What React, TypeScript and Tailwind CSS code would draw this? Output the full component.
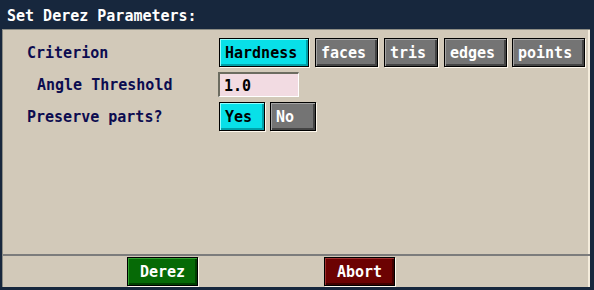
import { ReactNode } from 'react'

const mono = "block pt-[2px] font-['DejaVu_Sans_Mono','Liberation_Mono',monospace] font-bold text-[15px] leading-none"

type Tone = 'cyan' | 'grey'

function ToggleButton({ label, tone, width }: { label: string; tone: Tone; width: string }) {
  const toneCls =
    tone === 'cyan'
      ? 'bg-[#08e0e8] text-black shadow-[1px_1px_0_#fff8ec,inset_1px_1px_0_#90ffff,inset_-2px_-2px_0_#00a0a8]'
      : 'bg-[#747474] text-white shadow-[1px_1px_0_#fff8ec,inset_1px_1px_0_#a4a4a4,inset_-2px_-2px_0_#444444]'
  return (
    <div className={`${width} h-[29px] flex items-center pl-[5px] border border-black ${toneCls}`}>
      <span className={mono}>{label}</span>
    </div>
  )
}

function ActionButton({ label, color }: { label: string; color: 'green' | 'red' }) {
  const colorCls =
    color === 'green'
      ? 'bg-[#066a06] shadow-[1px_1px_0_#fff8ec,inset_1px_1px_0_#30a030,inset_-2px_-2px_0_#004000]'
      : 'bg-[#6c0202] shadow-[1px_1px_0_#fff8ec,inset_1px_1px_0_#a03030,inset_-2px_-2px_0_#400000]'
  return (
    <div className={`w-[71px] h-[29px] flex items-center justify-center border border-black text-white ${colorCls}`}>
      <span className={mono}>{label}</span>
    </div>
  )
}

function Row({ label, indent, children }: { label: string; indent?: boolean; children: ReactNode }) {
  return (
    <div className="flex items-center">
      <div className={`w-[192px] text-[#0c0c50] ${mono} ${indent ? 'pl-[10px]' : ''}`}>{label}</div>
      <div className="flex items-center gap-[6px]">{children}</div>
    </div>
  )
}

export default function App() {
  return (
    <div className="w-[594px] h-[290px] flex flex-col bg-[#17273d]">
      <div className="h-[29px] flex items-center pl-[7px] pt-[2px] text-white">
        <span className={mono}>Set Derez Parameters:</span>
      </div>

      <div className="ml-[2px] w-[588px] h-[258px] flex flex-col border-t border-l border-[#8c8c84] shadow-[inset_-2px_0_0_#f4ecdc] bg-[#d2c9b9]">
        <div className="flex-1 flex flex-col gap-[5px] pt-[8px] pl-[24px]">
          <Row label="Criterion">
            <ToggleButton label="Hardness" tone="cyan" width="w-[90px]" />
            <ToggleButton label="faces" tone="grey" width="w-[63px]" />
            <ToggleButton label="tris" tone="grey" width="w-[54px]" />
            <ToggleButton label="edges" tone="grey" width="w-[63px]" />
            <div className="-ml-px">
              <ToggleButton label="points" tone="grey" width="w-[73px]" />
            </div>
          </Row>
          <Row label="Angle Threshold" indent>
            <div className="-ml-px w-[81px] h-[25px] flex items-center pl-[4px] border-t-2 border-l-2 border-r border-b border-t-[#6c6c60] border-l-[#6c6c60] border-r-white border-b-white bg-[#f2dbe2] text-black">
              <span className={mono}>1.0</span>
            </div>
          </Row>
          <Row label="Preserve parts?">
            <ToggleButton label="Yes" tone="cyan" width="w-[46px]" />
            <div className="-ml-px">
              <ToggleButton label="No" tone="grey" width="w-[46px]" />
            </div>
          </Row>
        </div>

        <div className="h-[2px] bg-[#7c7c7c]" />

        <div className="h-[31px] flex items-start pt-[1px] pl-[124px] gap-[126px]">
          <ActionButton label="Derez" color="green" />
          <ActionButton label="Abort" color="red" />
        </div>
      </div>
    </div>
  )
}
